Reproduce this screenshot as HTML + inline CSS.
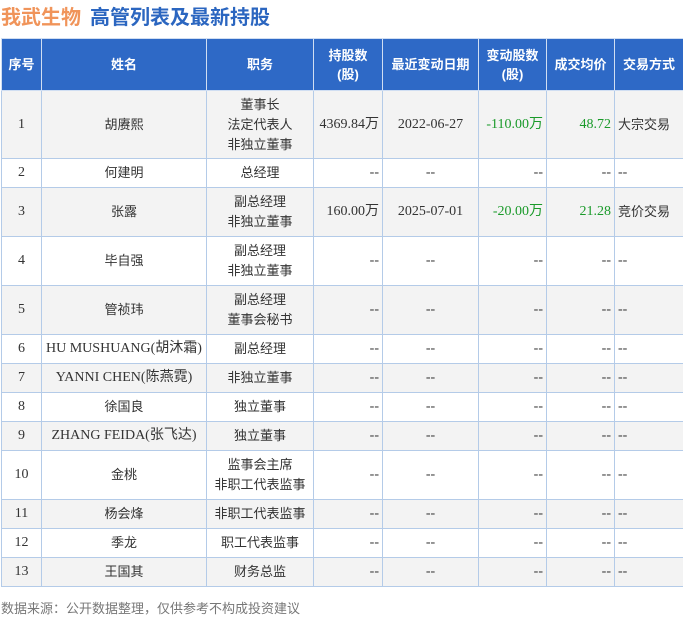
<!DOCTYPE html>
<html><head><meta charset="utf-8"><style>
body{margin:0;width:683px;height:617px;background:#fff;overflow:hidden;position:relative;font-family:"Liberation Sans","Noto Sans CJK SC",sans-serif;}
.t1{position:absolute;left:1px;top:1px;font-size:20px;font-weight:bold;color:#f0945a;letter-spacing:0px}
.t2{position:absolute;left:90px;top:1px;font-size:20px;font-weight:bold;color:#2b66c0}
table{position:absolute;left:1px;top:38px;border-collapse:collapse;table-layout:fixed;width:682px}
td,th{border:1px solid #b4cbe8;text-align:center;font-size:14px;padding:0 3px;color:#333;font-family:"Liberation Serif","Noto Sans CJK SC",serif;line-height:20px;overflow:hidden;white-space:nowrap}
th{background:#2e69c6;color:#fff;font-family:"Liberation Sans","Noto Sans CJK SC",sans-serif;font-weight:bold;font-size:13px;height:51px;line-height:19px;border-color:#d0def2}
tr:nth-child(even) td{background:#f3f3f3}
td.r{text-align:right}
td.l{text-align:left}
td.g{color:#1a9a2a}
td.c{font-family:"Liberation Sans","Noto Sans CJK SC",sans-serif;font-size:13px}
.f{position:absolute;left:1px;top:598px;font-size:13px;color:#777}
</style></head><body>
<div class="t1">我武生物</div><div class="t2">高管列表及最新持股</div>
<table>
<colgroup><col style="width:40px"><col style="width:165px"><col style="width:107px"><col style="width:69px"><col style="width:96px"><col style="width:68px"><col style="width:68px"><col style="width:69px"></colgroup>
<tr><th>序号</th><th>姓名</th><th>职务</th><th>持股数<br>(股)</th><th>最近变动日期</th><th>变动股数<br>(股)</th><th>成交均价</th><th>交易方式</th></tr>
<tr style="height:68px"><td>1</td><td class="c">胡赓熙</td><td class="c">董事长<br>法定代表人<br>非独立董事</td><td class="r">4369.84万</td><td>2022-06-27</td><td class="r g">-110.00万</td><td class="r g">48.72</td><td class="l c">大宗交易</td></tr>
<tr style="height:29px"><td>2</td><td class="c">何建明</td><td class="c">总经理</td><td class="r">--</td><td>--</td><td class="r">--</td><td class="r">--</td><td class="l">--</td></tr>
<tr style="height:49px"><td>3</td><td class="c">张露</td><td class="c">副总经理<br>非独立董事</td><td class="r">160.00万</td><td>2025-07-01</td><td class="r g">-20.00万</td><td class="r g">21.28</td><td class="l c">竞价交易</td></tr>
<tr style="height:49px"><td>4</td><td class="c">毕自强</td><td class="c">副总经理<br>非独立董事</td><td class="r">--</td><td>--</td><td class="r">--</td><td class="r">--</td><td class="l">--</td></tr>
<tr style="height:49px"><td>5</td><td class="c">管祯玮</td><td class="c">副总经理<br>董事会秘书</td><td class="r">--</td><td>--</td><td class="r">--</td><td class="r">--</td><td class="l">--</td></tr>
<tr style="height:29px"><td>6</td><td>HU MUSHUANG(胡沐霜)</td><td class="c">副总经理</td><td class="r">--</td><td>--</td><td class="r">--</td><td class="r">--</td><td class="l">--</td></tr>
<tr style="height:29px"><td>7</td><td>YANNI CHEN(陈燕霓)</td><td class="c">非独立董事</td><td class="r">--</td><td>--</td><td class="r">--</td><td class="r">--</td><td class="l">--</td></tr>
<tr style="height:29px"><td>8</td><td class="c">徐国良</td><td class="c">独立董事</td><td class="r">--</td><td>--</td><td class="r">--</td><td class="r">--</td><td class="l">--</td></tr>
<tr style="height:29px"><td>9</td><td>ZHANG FEIDA(张飞达)</td><td class="c">独立董事</td><td class="r">--</td><td>--</td><td class="r">--</td><td class="r">--</td><td class="l">--</td></tr>
<tr style="height:49px"><td>10</td><td class="c">金桃</td><td class="c">监事会主席<br>非职工代表监事</td><td class="r">--</td><td>--</td><td class="r">--</td><td class="r">--</td><td class="l">--</td></tr>
<tr style="height:29px"><td>11</td><td class="c">杨会烽</td><td class="c">非职工代表监事</td><td class="r">--</td><td>--</td><td class="r">--</td><td class="r">--</td><td class="l">--</td></tr>
<tr style="height:29px"><td>12</td><td class="c">季龙</td><td class="c">职工代表监事</td><td class="r">--</td><td>--</td><td class="r">--</td><td class="r">--</td><td class="l">--</td></tr>
<tr style="height:29px"><td>13</td><td class="c">王国其</td><td class="c">财务总监</td><td class="r">--</td><td>--</td><td class="r">--</td><td class="r">--</td><td class="l">--</td></tr>
</table>
<div class="f">数据来源：公开数据整理，仅供参考不构成投资建议</div>
</body></html>
